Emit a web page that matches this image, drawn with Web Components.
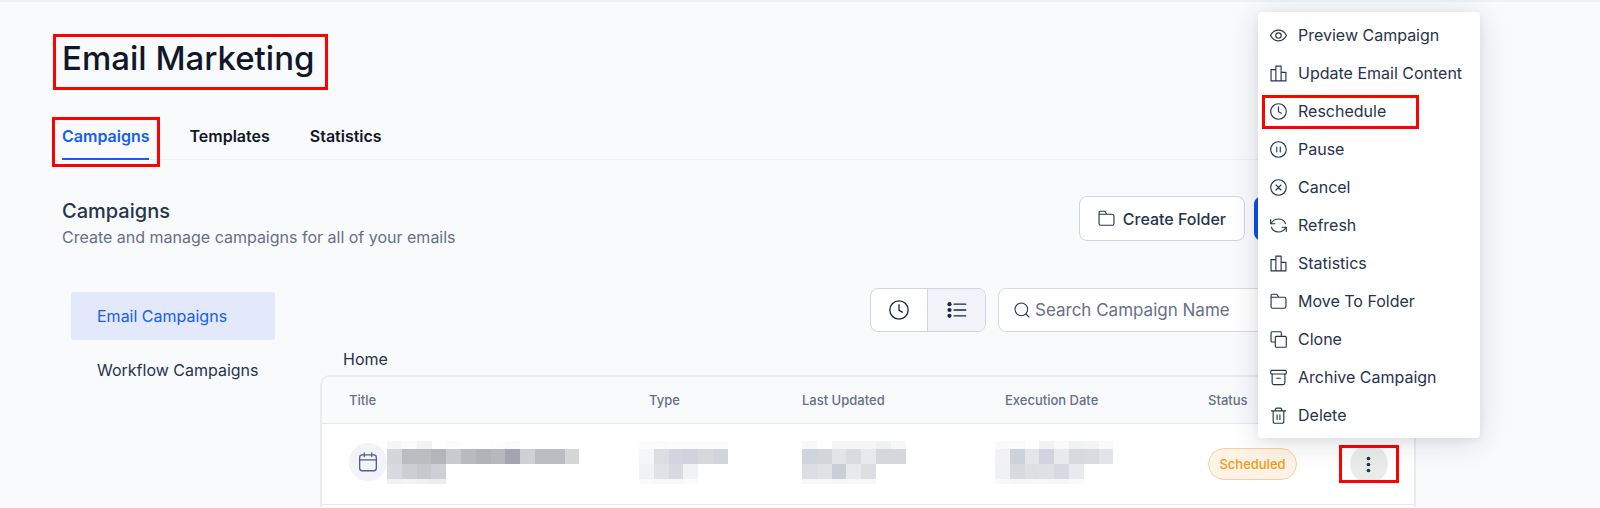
<!DOCTYPE html>
<html lang="en">
<head>
<meta charset="utf-8">
<title>Email Marketing</title>
<style>
  body {
    margin: 0;
    background: #f9fafc;
    color: #26344d;
    font: 400 16px/24px Inter, "Liberation Sans", sans-serif;
  }
</style>
</head>
<body>
<email-marketing></email-marketing>

<script>
const BUTTON_RESET = `
  button {
    margin: 0; padding: 0; border: 0; background: none;
    color: inherit; font: inherit; cursor: pointer;
  }
`;

function define(name, html, setup) {
  customElements.define(name, class extends HTMLElement {
    connectedCallback() {
      if (this.shadowRoot) return;
      this.attachShadow({ mode: 'open' }).innerHTML = html;
      if (setup) setup(this, this.shadowRoot);
    }
  });
}

/* ── Icons ─────────────────────────────────────────────────────────────────── */

const ICONS = {
  eye: '<path d="M.8 12C3 7.400 7.200 4.500 12 4.500S21 7.400 23.200 12C21 16.600 16.800 19.500 12 19.500S3 16.600.8 12z"/><circle cx="12" cy="12" r="3.800"/>',
  bars: '<path d="M8.300 22.500V1.500h7.400v21M8.300 6.500H1.500v16h21v-12h-6.800"/>',
  clock: '<circle cx="12" cy="12" r="11"/><path d="M12 5.500v7l4 2"/>',
  pause: '<circle cx="12" cy="12" r="11"/><path d="M9.500 8.500v7M14.500 8.500v7"/>',
  cancel: '<circle cx="12" cy="12" r="11"/><path d="M8.500 8.500l7 7M15.500 8.500l-7 7"/>',
  refresh: '<path d="M1 3.500V9.500h6M23 20.500v-6h-6"/><path d="M1.500 9.200C6 1 18.500.5 22 9.500M22.500 14.800C18 23 5.500 23.500 2 14.500"/>',
  folder: '<path d="M1.500 7V3.500c0-1.200.6-1.800 1.800-1.800h5.500c.8 0 1.300.3 1.700 1L12.300 6H20c1.700 0 2.500.8 2.500 2.500V19c0 1.700-.8 2.500-2.500 2.500H4c-1.700 0-2.500-.8-2.500-2.500V6h11"/>',
  clone: '<path d="M7.500 15.500H3c-1 0-1.500-.5-1.500-1.500V2.500c0-1 .5-1.500 1.500-1.500h11.500c1 0 1.500.5 1.500 1.500V7"/><rect x="7.500" y="7.500" width="15.500" height="15.500" rx="1.500"/>',
  archive: '<rect x="1" y="2" width="22" height="5" rx="1.500"/><path d="M3 7v12.500c0 1.700.8 2.500 2.500 2.500h13c1.700 0 2.500-.8 2.500-2.500V7M9.500 13h5"/>',
  trash: '<path d="M2 5.500h20M7.500 5.500V3.500c0-1.400.8-2 2-2h5c1.200 0 2 .6 2 2v2M4.500 5.500V20c0 2 .8 3 2.500 3h10c1.700 0 2.500-1 2.500-3V5.500M10 11v6.500M14 11v6.500"/>',
  search: '<circle cx="11" cy="11" r="9.500"/><path d="M18 18l4.500 4.500"/>',
  list: '<path d="M8.500 5h14M8.500 12h14M8.500 19h14"/><g fill="currentColor" stroke="none"><circle cx="3" cy="5" r="2.500"/><circle cx="3" cy="12" r="2.500"/><circle cx="3" cy="19" r="2.500"/></g>',
  calendar: '<rect x="2" y="3.500" width="20" height="19" rx="3"/><path d="M2 9.500h20M7.500 1v4.500M16.500 1v4.500"/>',
  dots: '<g fill="currentColor" stroke="none"><circle cx="12" cy="3.500" r="2.600"/><circle cx="12" cy="12" r="2.600"/><circle cx="12" cy="20.500" r="2.600"/></g>',
};

define('app-icon', `
  <style>
    :host { display: inline-flex; flex: none; width: var(--icon-size, 17px); height: var(--icon-size, 17px); }
    svg {
      width: 100%; height: 100%; fill: none; overflow: visible;
      stroke: currentColor; stroke-width: 1.6; stroke-linecap: round; stroke-linejoin: round;
    }
  </style>
  <svg viewBox="0 0 24 24" aria-hidden="true"></svg>
`, (el, root) => {
  root.querySelector('svg').innerHTML = ICONS[el.getAttribute('name')] || '';
});

/* ── Red outline drawn around the thing it wraps ───────────────────────────── */

define('call-out', `
  <style>
    :host { display: inline-block; position: relative; }
    :host::after {
      content: ""; position: absolute; inset: var(--reach, -8px);
      border: 3px solid #fb0300; box-sizing: border-box; pointer-events: none;
    }
  </style>
  <slot></slot>
`);

/* ── Redacted text, as a grid of grey blocks ───────────────────────────────── */

const MOSAICS = {
  title: [
    'f6f6f6 fbfbfb f3f3f4 - fafcfc - - fdfdfd fbfbfb',
    'd5d6d8 bbbcc1 bcbdc1 b4b5ba c9cacf b9bac0 b2b3b8 b7b8bd a2a5b0 cfd0d5 bbbcc1 bbbcc1 d5d6d8',
    'd9dae0 cecfd4 c8c9ce cfd0d5',
    'f1f1f2 f3f3f4 f0f0f1 ebecee',
  ],
  type: [
    'fcfcfc fbfbfb fcfcfc fcfcfc fcfcfc fcfcfc',
    'f5f6f8 dcdde2 d2d5e0 d0d3df d7d8de d1d4dc',
    'f1f2f4 e1e2e6 d8dae1 f1f2f4',
    'fafafa f7f7f8 f7f7f8 fbfbfb',
  ],
  updated: [
    'f8f8f9 - f6f6f7 f6f6f7 f6f6f7 f0f1f3 f6f7f8',
    'd0d4df d3d5da e3e4e8 d9dbe0 e8e9ee d5d7dd d6d7dd',
    'dddee3 e1e2e6 c9ced7 e8e9ed dcdee3',
    'f7f7f8 f7f7f8 f6f6f7 f7f7f8 f7f7f8',
  ],
  execution: [
    'fafafa fbfbfb - f1f2f4 fafafa f1f2f4 f3f4f6 fafafa',
    'f2f2f4 ccd1da e3e5ea d1d4de e8eaed d7d9df d9dbe1 e2e4e9',
    'f0f1f3 d9dae0 dddfe3 e0e1e5 d8dae1 e9eaed',
    'f8f8f9 f6f6f7 f7f7f8 f7f7f8 f6f6f7 fafafa',
  ],
};

define('mosaic-text', `
  <style>
    :host { display: block; }
    svg { display: block; }
  </style>
  <svg height="43" aria-hidden="true" shape-rendering="crispEdges"></svg>
`, (el, root) => {
  const rows = MOSAICS[el.getAttribute('name')].map(r => r.split(' '));
  const tops = [0, 8, 23, 38, 43];
  const cell = 14.8;
  const svg = root.querySelector('svg');
  svg.setAttribute('width', Math.round(rows[1].length * cell));
  svg.innerHTML = rows.map((row, y) => row.map((c, x) => c === '-' ? '' :
    `<rect x="${Math.round(x * cell)}" y="${tops[y]}" width="15" height="${tops[y + 1] - tops[y]}" fill="#${c}"/>`
  ).join('')).join('');
});

/* ── Tabs ──────────────────────────────────────────────────────────────────── */

define('page-tabs', `
  <style>
    ${BUTTON_RESET}
    :host { display: block; }
    nav { display: flex; gap: 40px; border-bottom: 1px solid #eceff3; }
    call-out { --reach: -7px -11px -7px -10px; margin-bottom: -1px; }
    button { padding-bottom: 11px; font-weight: 600; color: #0f1728; }
    button[aria-current] { padding-bottom: 10px; border-bottom: 2px solid #155eef; color: #155eef; }
  </style>
  <nav>
    <call-out><button type="button" aria-current="page">Campaigns</button></call-out>
    <button type="button">Templates</button>
    <button type="button">Statistics</button>
  </nav>
`);

/* ── Buttons and toolbar ───────────────────────────────────────────────────── */

define('section-head', `
  <style>
    ${BUTTON_RESET}
    :host { display: flex; justify-content: space-between; align-items: flex-start; height: 54px; }
    h2 { margin: 1px 0 0; font-size: 20px; line-height: 28px; font-weight: 500; }
    p { margin: 0; color: #667088; }
    .actions { display: flex; gap: 9px; }
    button {
      display: flex; align-items: center; gap: 8px; box-sizing: border-box;
      height: 45px; padding: 0 18px; border: 1px solid #d0d3e0; border-radius: 8px;
      background: #fff; font-weight: 500;
    }
    button.primary { width: 162px; border-color: #0d50e8; background: #0d50e8; color: #fff; }
  </style>
  <div>
    <h2>Campaigns</h2>
    <p>Create and manage campaigns for all of your emails</p>
  </div>
  <div class="actions">
    <button type="button"><app-icon name="folder"></app-icon>Create Folder</button>
    <button type="button" class="primary" aria-label="New campaign"></button>
  </div>
`);

define('campaign-toolbar', `
  <style>
    ${BUTTON_RESET}
    :host { display: flex; justify-content: flex-end; gap: 12px; }
    .toggle {
      display: flex; border: 1px solid #d0d3e0; border-radius: 8px;
      overflow: hidden; background: #fff; color: #1b2640;
    }
    .toggle button {
      display: flex; align-items: center; justify-content: center;
      width: 56px; height: 42px; --icon-size: 20px;
    }
    .toggle button + button { width: 58px; border-left: 1px solid #d0d3e0; background: #f1f3f8; }
    label {
      display: flex; align-items: center; gap: 5px; box-sizing: border-box;
      width: 418px; padding: 0 15px; border: 1px solid #d8dbe5; border-radius: 8px;
      background: #fff; --icon-size: 16px;
    }
    input {
      flex: 1; min-width: 0; padding: 0; border: 0; outline: 0; background: none;
      font: inherit; font-size: 17px; color: inherit;
    }
    input::placeholder { color: #667088; opacity: 1; }
  </style>
  <div class="toggle">
    <button type="button" aria-label="Recent"><app-icon name="clock"></app-icon></button>
    <button type="button" aria-label="List"><app-icon name="list"></app-icon></button>
  </div>
  <label><app-icon name="search"></app-icon>
    <input type="text" placeholder="Search Campaign Name" aria-label="Search Campaign Name">
  </label>
`);

define('side-nav', `
  <style>
    :host { display: block; }
    nav { display: flex; flex-direction: column; gap: 6px; padding: 4px 45px 0 9px; }
    a { padding: 12px 16px 12px 26px; border-radius: 3px; color: inherit; text-decoration: none; white-space: nowrap; }
    a[aria-current] { background: #e3e9fb; color: #155eef; }
  </style>
  <nav>
    <a href="#email" aria-current="page">Email Campaigns</a>
    <a href="#workflow">Workflow Campaigns</a>
  </nav>
`);

/* ── Campaign table ────────────────────────────────────────────────────────── */

define('campaign-table', `
  <style>
    ${BUTTON_RESET}
    :host {
      display: block; border: 2px solid #e9ebf0; border-bottom: 0;
      border-radius: 10px 10px 0 0; background: #fff; overflow: hidden;
    }
    table { width: 100%; table-layout: fixed; border-collapse: separate; border-spacing: 0; }
    th, td { padding: 0; text-align: left; border-bottom: 1px solid #e6e8ed; }
    th {
      height: 46px; background: #f9fafc;
      font-size: 13px; line-height: 20px; font-weight: 500; color: #667088;
    }
    th.inset { padding-left: 10px; }
    th:first-child, td:first-child { padding-left: 27px; }
    td { height: 76px; padding-bottom: 4px; }
    td.status, td.more { height: 80px; padding-bottom: 0; }
    col.type { width: 163px; }
    col.updated { width: 193px; }
    col.execution { width: 213px; }
    col.status { width: 115px; }
    col.more { width: 91px; }
    .title { display: flex; align-items: center; }
    .badge {
      display: flex; align-items: center; justify-content: center;
      width: 38px; height: 38px; border-radius: 50%;
      background: #f2f3f8; color: #536079; --icon-size: 20px;
    }
    .pill {
      display: block; box-sizing: border-box; width: 89px; padding: 4px 0;
      border: 1px solid #fad09a; border-radius: 16px; text-align: center;
      background: #fef3e6; color: #f59a0b; font-size: 13px; line-height: 22px; font-weight: 500;
    }
    .more { text-align: center; }
    call-out { --reach: 0 -11px; vertical-align: middle; }
    .more button {
      display: flex; align-items: center; justify-content: center;
      width: 38px; height: 38px; border-radius: 50%; background: #e9eceb;
    }
    .rest { height: 2px; }
  </style>
  <table>
    <colgroup>
      <col><col class="type"><col class="updated"><col class="execution"><col class="status"><col class="more">
    </colgroup>
    <thead>
      <tr>
        <th>Title</th><th class="inset">Type</th><th>Last Updated</th>
        <th class="inset">Execution Date</th><th>Status</th><th aria-label="Actions"></th>
      </tr>
    </thead>
    <tbody>
      <tr>
        <td><div class="title"><span class="badge"><app-icon name="calendar"></app-icon></span><mosaic-text name="title"></mosaic-text></div></td>
        <td><mosaic-text name="type"></mosaic-text></td>
        <td><mosaic-text name="updated"></mosaic-text></td>
        <td><mosaic-text name="execution"></mosaic-text></td>
        <td class="status"><span class="pill">Scheduled</span></td>
        <td class="more"><call-out><button type="button" aria-label="More actions"><app-icon name="dots"></app-icon></button></call-out></td>
      </tr>
    </tbody>
  </table>
  <div class="rest"></div>
`);

/* ── Row menu ──────────────────────────────────────────────────────────────── */

const MENU = [
  ['eye', 'Preview Campaign'],
  ['bars', 'Update Email Content'],
  ['clock', 'Reschedule', true],
  ['pause', 'Pause'],
  ['cancel', 'Cancel'],
  ['refresh', 'Refresh'],
  ['bars', 'Statistics'],
  ['folder', 'Move To Folder'],
  ['clone', 'Clone'],
  ['archive', 'Archive Campaign'],
  ['trash', 'Delete'],
];

define('row-menu', `
  <style>
    ${BUTTON_RESET}
    :host {
      display: flex; flex-direction: column; box-sizing: border-box;
      width: 222px; padding: 4px 0; border-radius: 4px; background: #fff;
      box-shadow: 0 4px 30px rgba(20, 28, 40, .14), 0 2px 8px rgba(20, 28, 40, .06);
    }
    button {
      display: flex; align-items: center; gap: 11px;
      width: 100%; height: 38px; padding: 0 12px; white-space: nowrap;
    }
    call-out { --reach: 3px 61px 1px 4px; }
  </style>
`, (el, root) => {
  root.innerHTML += MENU.map(([icon, label, marked]) => {
    const item = `<button type="button"><app-icon name="${icon}"></app-icon>${label}</button>`;
    return marked ? `<call-out>${item}</call-out>` : item;
  }).join('');
});

/* ── Page ──────────────────────────────────────────────────────────────────── */

define('email-marketing', `
  <style>
    :host { display: block; position: relative; border-top: 2px solid #edf2f6; }
    main { padding: 36px 184px 0 62px; }
    h1 { margin: 0; font-size: 33px; line-height: 40px; font-weight: 500; color: #0f1728; }
    call-out { display: table; --reach: -4px -14px -12px -9px; }
    page-tabs { margin-top: 46px; }
    section-head { margin-top: 36px; }
    .body { display: grid; grid-template-columns: 258px 1fr; margin-top: 38px; }
    .crumb { margin: 15px 0 4px 23px; }
    row-menu { position: absolute; top: 10px; right: 120px; }
  </style>
  <main>
    <call-out><h1>Email Marketing</h1></call-out>
    <page-tabs></page-tabs>
    <section-head></section-head>
    <div class="body">
      <side-nav></side-nav>
      <div>
        <campaign-toolbar></campaign-toolbar>
        <p class="crumb">Home</p>
        <campaign-table></campaign-table>
      </div>
    </div>
  </main>
  <row-menu></row-menu>
`);
</script>
</body>
</html>
